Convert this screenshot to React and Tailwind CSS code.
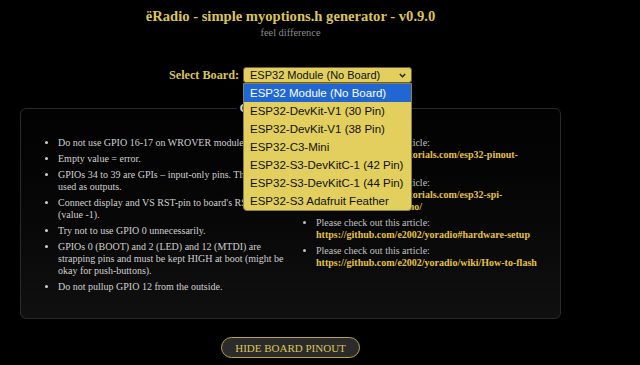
import React from "react";

const serif = { fontFamily: '"Liberation Serif", "Times New Roman", serif' };

const leftItems = [
  "Do not use GPIO 16-17 on WROVER module.",
  "Empty value = error.",
  "GPIOs 34 to 39 are GPIs – input-only pins. They cannot be used as outputs.",
  "Connect display and VS RST-pin to board's RST pin (value\u00a0-1).",
  "Try not to use GPIO 0 unnecessarily.",
  "GPIOs 0 (BOOT) and 2 (LED) and 12 (MTDI) are strapping pins and must be kept HIGH at boot (might be okay for push-buttons).",
  "Do not pullup GPIO 12 from the outside.",
];

const rightItems = [
  "https://randomnerdtutorials.com/esp32-pinout-reference-gpios/",
  "https://randomnerdtutorials.com/esp32-spi-communication-arduino/",
  "https://github.com/e2002/yoradio#hardware-setup",
  "https://github.com/e2002/yoradio/wiki/How-to-flash",
];

const options = [
  "ESP32 Module (No Board)",
  "ESP32-DevKit-V1 (30 Pin)",
  "ESP32-DevKit-V1 (38 Pin)",
  "ESP32-C3-Mini",
  "ESP32-S3-DevKitC-1 (42 Pin)",
  "ESP32-S3-DevKitC-1 (44 Pin)",
  "ESP32-S3 Adafruit Feather",
];

export default function App() {
  return (
    <div className="w-full h-[365px] bg-black overflow-hidden" style={serif}>
      <div className="w-[581px] flex flex-col items-center">
        <h1 className="mt-[7px] text-[14.6px] leading-[18px] font-bold text-[#dcc555]">
          ëRadio - simple myoptions.h generator - v0.9.0
        </h1>
        <div className="mt-[2px] text-[10.4px] leading-[12px] text-[#8a8a8a]">feel difference</div>

        <div className="mt-[28px] flex items-center gap-[4px]">
          <span className="text-[12.2px] font-bold text-[#dcc555] leading-[16px]">Select Board:</span>
          <div className="relative">
            <div
              className="w-[169px] h-[16px] rounded-[3px] border border-[#6b6030] bg-[#e2cf5e] flex items-center justify-between pl-[6px] pr-[5px] text-[11px] text-[#111]"
              style={{ fontFamily: '"Liberation Sans", Arial, sans-serif' }}
            >
              <span className="leading-[14px]">ESP32 Module (No Board)</span>
              <svg width="7" height="5" viewBox="0 0 7 5" fill="none">
                <path d="M0.8 1 L3.5 3.8 L6.2 1" stroke="#222" strokeWidth="1.4" />
              </svg>
            </div>
            <div
              className="absolute left-0 top-[16px] z-10 w-[169px] bg-[#e2cf5e] border border-[#8a7f45] rounded-b-[4px] overflow-hidden text-[11.5px] text-[#111]"
              style={{ fontFamily: '"Liberation Sans", Arial, sans-serif' }}
            >
              {options.map((o, i) => (
                <div
                  key={o}
                  className={
                    i === 0
                      ? "h-[18px] leading-[18px] pl-[6px] bg-[#2167d4] text-white"
                      : "h-[18px] leading-[18px] pl-[6px]"
                  }
                >
                  {o}
                </div>
              ))}
            </div>
          </div>
        </div>

        <div className="w-full px-[20px] mt-[18px]">
          <fieldset className="w-full border border-[#2a2a2a] rounded-[6px] bg-linear-to-b from-[#020202] to-[#101010] px-[12px] pb-[25px]">
            <legend className="mx-auto px-[2px] text-[13px] leading-[14px] font-bold text-[#d2d2d2]">
              Connection Notes:
            </legend>
            <div className="pt-[22px] grid grid-cols-[263px_1fr] text-[10px] leading-[12px] text-[#d0d0d0]">
              <ul className="list-disc pl-[25px] flex flex-col gap-[4px]">
                {leftItems.map((t) => (
                  <li key={t}>{t}</li>
                ))}
              </ul>
              <ul className="list-disc pl-[20px] flex flex-col gap-[4px] text-[#c0c0c0]">
                {rightItems.map((t) => (
                  <li key={t}>
                    Please check out this article:
                    <br />
                    <span className="font-bold text-[#e3c343]">{t}</span>
                  </li>
                ))}
              </ul>
            </div>
          </fieldset>
        </div>

        <button className="mt-[18px] h-[21px] px-[13px] rounded-full border-[1.5px] border-[#b9a445] bg-[#2b2b2b] text-[11px] leading-[14px] text-[#dcc555]">
          HIDE BOARD PINOUT
        </button>
      </div>
    </div>
  );
}
